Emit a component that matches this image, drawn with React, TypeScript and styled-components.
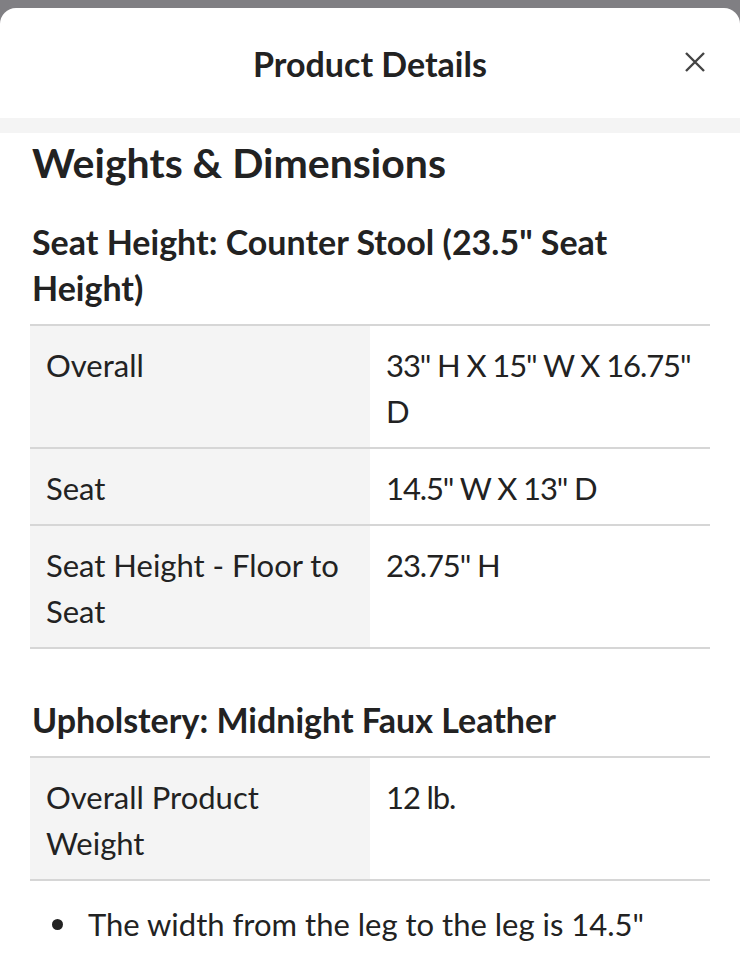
import React from "react";
import styled, { createGlobalStyle } from "styled-components";

const Global = createGlobalStyle`
  html, body { margin: 0; padding: 0; background: #807f83; }
  body { font-family: "Lato", "Noto Sans", sans-serif; color: #222; }
  * { box-sizing: border-box; }
`;

const Page = styled.div`
  padding-top: 8px;
  min-height: 960px;
  background: #807f83;
`;

const Sheet = styled.div`
  background: #fff;
  border-radius: 16px 16px 0 0;
  min-height: 952px;
  overflow: hidden;
`;

const Header = styled.header`
  position: relative;
  height: 110px;
  display: flex;
  align-items: center;
  justify-content: center;
`;

const Title = styled.h1`
  margin: 0;
  font-size: 34px;
  font-weight: 700;
  color: #222;
  letter-spacing: 0;
`;

const Close = styled.button`
  position: absolute;
  right: 30px;
  top: 39px;
  width: 30px;
  height: 30px;
  border: 0;
  background: none;
  padding: 0;
  display: flex;
  align-items: center;
  justify-content: center;
`;

const Band = styled.div`
  height: 15px;
  background: #f4f4f4;
`;

const Content = styled.main`
  padding: 6px 30px 0;
`;

const H2 = styled.h2`
  margin: 0 2px;
  font-size: 41px;
  line-height: 48px;
  font-weight: 700;
  color: #222;
`;

const H3 = styled.h3<{ $top: number }>`
  margin: ${(p) => p.$top}px 2px 13px;
  font-size: 34px;
  line-height: 46px;
  font-weight: 700;
  color: #222;
`;

const Table = styled.div`
  border-top: 2px solid #d6d6d6;
`;

const Row = styled.div`
  display: grid;
  grid-template-columns: 1fr 1fr;
  border-bottom: 2px solid #d6d6d6;
`;

const Cell = styled.div<{ $label?: boolean }>`
  padding: 16px ${(p) => (p.$label ? "16px" : "6px")} 13px 16px;
  font-size: 31px;
  line-height: 46px;
  color: #222;
  letter-spacing: ${(p) => (p.$label ? "0" : "-1.1px")};
  background: ${(p) => (p.$label ? "#f4f4f4" : "#fff")};
`;

const List = styled.ul`
  margin: 20px 0 0;
  padding: 0 0 0 22px;
  list-style: none;
  font-size: 31px;
  line-height: 46px;
  color: #222;
`;

const Item = styled.li`
  display: flex;
  align-items: center;
  gap: 25px;
`;

const Dot = styled.span`
  flex: none;
  width: 11px;
  height: 11px;
  border-radius: 50%;
  background: #222;
`;

const XIcon = () => (
  <svg width="22" height="22" viewBox="0 0 22 22" fill="none">
    <path d="M2 2L20 20M20 2L2 20" stroke="#444" strokeWidth="2.4" strokeLinecap="butt" />
  </svg>
);

type Spec = [string, string];

const SpecTable = ({ rows }: { rows: Spec[] }) => (
  <Table>
    {rows.map(([k, v]) => (
      <Row key={k}>
        <Cell $label>{k}</Cell>
        <Cell>{v}</Cell>
      </Row>
    ))}
  </Table>
);

export default function App() {
  return (
    <Page>
      <Global />
      <Sheet>
        <Header>
          <Title>Product Details</Title>
          <Close aria-label="Close">
            <XIcon />
          </Close>
        </Header>
        <Band />
        <Content>
          <H2>Weights &amp; Dimensions</H2>
          <H3 $top={32}>Seat Height: Counter Stool (23.5" Seat Height)</H3>
          <SpecTable
            rows={[
              ["Overall", "33'' H X 15'' W X 16.75'' D"],
              ["Seat", "14.5'' W X 13'' D"],
              ["Seat Height - Floor to Seat", "23.75'' H"],
            ]}
          />
          <H3 $top={48}>Upholstery: Midnight Faux Leather</H3>
          <SpecTable rows={[["Overall Product Weight", "12 lb."]]} />
          <List>
            <Item>
              <Dot />
              <span>The width from the leg to the leg is 14.5"</span>
            </Item>
          </List>
        </Content>
      </Sheet>
    </Page>
  );
}
